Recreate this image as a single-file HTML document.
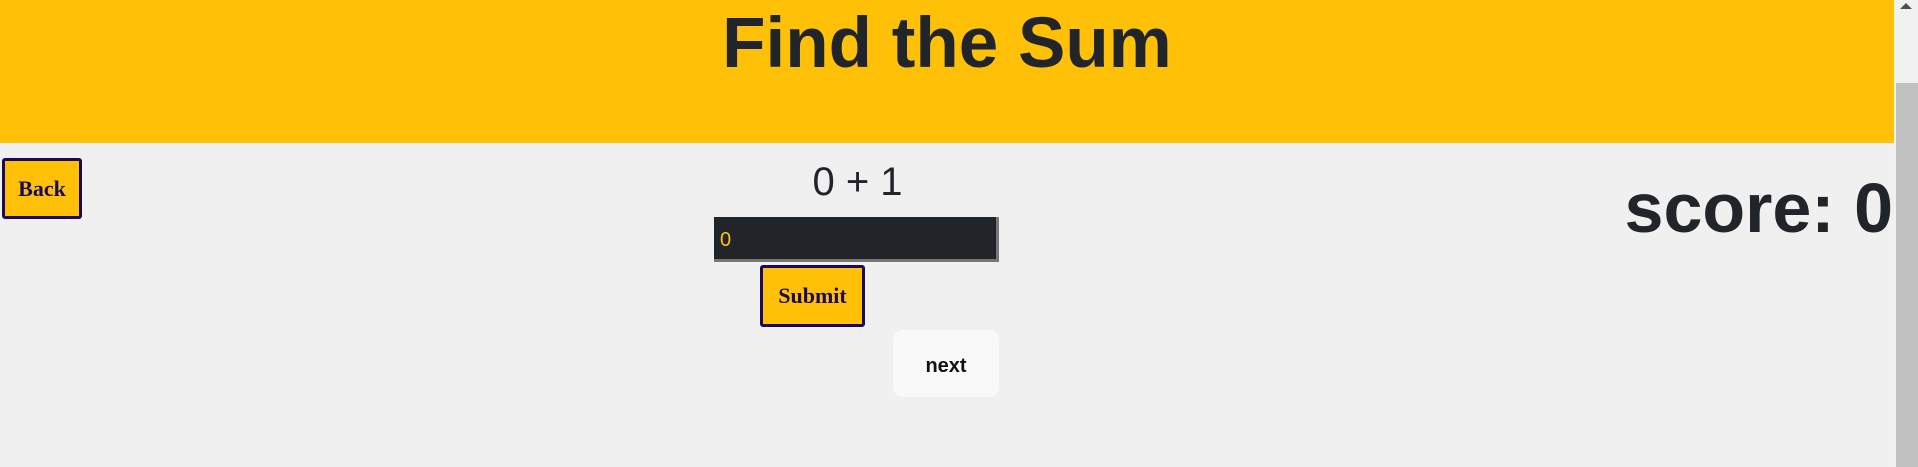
<!DOCTYPE html>
<html><head><style>
html,body{margin:0;padding:0;width:1918px;height:467px;overflow:hidden;background:#f0f0f0;font-family:"Liberation Sans",sans-serif;}
.hdr{position:absolute;left:0;top:0;width:1894px;height:143px;background:#ffc107;}
.title{position:absolute;left:0;width:1894px;top:2px;text-align:center;font-size:71px;font-weight:bold;color:#212529;line-height:84px;}
.btn{position:absolute;box-sizing:border-box;background:#ffc107;border:3px solid #1a0a5e;border-radius:3px;color:#1a0a5e;font-family:"Liberation Serif",serif;font-weight:bold;font-size:22px;display:flex;align-items:center;justify-content:center;}
.eq{position:absolute;left:790px;width:135px;top:158px;text-align:center;font-size:40px;color:#212529;line-height:48px;}
.inp{position:absolute;left:714px;top:217px;width:285px;height:45px;box-sizing:border-box;background:#212529;border-right:3px solid #777;border-bottom:3px solid #777;color:#ffc107;font-size:20px;padding:12px 6px;}
.next{position:absolute;left:893px;top:330px;width:106px;height:67px;background:#f9f9f9;border-radius:10px;display:flex;align-items:center;justify-content:center;font-size:20px;font-weight:bold;color:#111;padding-top:6px;box-sizing:border-box;}
.score{position:absolute;right:25px;top:166px;font-size:70px;color:#212529;line-height:84px;font-weight:bold;}
.sb{position:absolute;left:1894px;top:0;width:24px;height:467px;background:#f1f1f1;}
.thumb{position:absolute;left:2px;top:83px;width:22px;height:384px;background:#c1c1c1;}
.arr{position:absolute;left:6px;top:3px;width:0;height:0;border-left:6px solid transparent;border-right:6px solid transparent;border-bottom:6px solid #505050;}
</style></head><body>
<div class="hdr"><div class="title">Find the Sum</div></div>
<div class="btn" style="left:2px;top:158px;width:80px;height:61px;">Back</div>
<div class="eq">0 + 1</div>
<div class="inp">0</div>
<div class="btn" style="left:760px;top:265px;width:105px;height:62px;">Submit</div>
<div class="next">next</div>
<div class="score">score: 0</div>
<div class="sb"><div class="arr"></div><div class="thumb"></div></div>
</body></html>
